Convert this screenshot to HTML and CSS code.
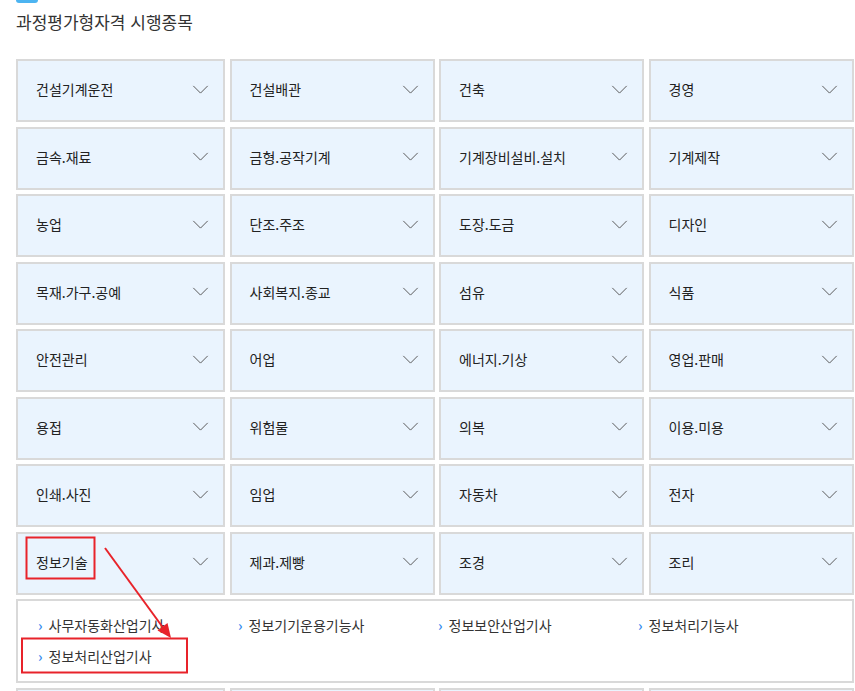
FILE: index.html
```html
<!DOCTYPE html>
<html lang="ko">
<head>
    <meta charset="UTF-8">
    <meta name="viewport" content="width=device-width, initial-scale=1.0">
    <title>과정평가형자격 시행종목</title>
    <link rel="stylesheet" href="styles.css">
</head>
<body>
<div class="wrap">
    <!-- 제목 -->
    <div class="title-tab"></div>
    <h2 class="title">과정평가형자격 시행종목</h2>

    <!-- 종목 목록 -->
    <div class="field-grid">
        <div class="field">건설기계운전<svg class="chev" viewBox="0 0 18 10"><polyline points="1,1 9,9 17,1"/></svg></div>
        <div class="field">건설배관<svg class="chev" viewBox="0 0 18 10"><polyline points="1,1 9,9 17,1"/></svg></div>
        <div class="field">건축<svg class="chev" viewBox="0 0 18 10"><polyline points="1,1 9,9 17,1"/></svg></div>
        <div class="field">경영<svg class="chev" viewBox="0 0 18 10"><polyline points="1,1 9,9 17,1"/></svg></div>

        <div class="field">금속.재료<svg class="chev" viewBox="0 0 18 10"><polyline points="1,1 9,9 17,1"/></svg></div>
        <div class="field">금형.공작기계<svg class="chev" viewBox="0 0 18 10"><polyline points="1,1 9,9 17,1"/></svg></div>
        <div class="field">기계장비설비.설치<svg class="chev" viewBox="0 0 18 10"><polyline points="1,1 9,9 17,1"/></svg></div>
        <div class="field">기계제작<svg class="chev" viewBox="0 0 18 10"><polyline points="1,1 9,9 17,1"/></svg></div>

        <div class="field">농업<svg class="chev" viewBox="0 0 18 10"><polyline points="1,1 9,9 17,1"/></svg></div>
        <div class="field">단조.주조<svg class="chev" viewBox="0 0 18 10"><polyline points="1,1 9,9 17,1"/></svg></div>
        <div class="field">도장.도금<svg class="chev" viewBox="0 0 18 10"><polyline points="1,1 9,9 17,1"/></svg></div>
        <div class="field">디자인<svg class="chev" viewBox="0 0 18 10"><polyline points="1,1 9,9 17,1"/></svg></div>

        <div class="field">목재.가구.공예<svg class="chev" viewBox="0 0 18 10"><polyline points="1,1 9,9 17,1"/></svg></div>
        <div class="field">사회복지.종교<svg class="chev" viewBox="0 0 18 10"><polyline points="1,1 9,9 17,1"/></svg></div>
        <div class="field">섬유<svg class="chev" viewBox="0 0 18 10"><polyline points="1,1 9,9 17,1"/></svg></div>
        <div class="field">식품<svg class="chev" viewBox="0 0 18 10"><polyline points="1,1 9,9 17,1"/></svg></div>

        <div class="field">안전관리<svg class="chev" viewBox="0 0 18 10"><polyline points="1,1 9,9 17,1"/></svg></div>
        <div class="field">어업<svg class="chev" viewBox="0 0 18 10"><polyline points="1,1 9,9 17,1"/></svg></div>
        <div class="field">에너지.기상<svg class="chev" viewBox="0 0 18 10"><polyline points="1,1 9,9 17,1"/></svg></div>
        <div class="field">영업.판매<svg class="chev" viewBox="0 0 18 10"><polyline points="1,1 9,9 17,1"/></svg></div>

        <div class="field">용접<svg class="chev" viewBox="0 0 18 10"><polyline points="1,1 9,9 17,1"/></svg></div>
        <div class="field">위험물<svg class="chev" viewBox="0 0 18 10"><polyline points="1,1 9,9 17,1"/></svg></div>
        <div class="field">의복<svg class="chev" viewBox="0 0 18 10"><polyline points="1,1 9,9 17,1"/></svg></div>
        <div class="field">이용.미용<svg class="chev" viewBox="0 0 18 10"><polyline points="1,1 9,9 17,1"/></svg></div>

        <div class="field">인쇄.사진<svg class="chev" viewBox="0 0 18 10"><polyline points="1,1 9,9 17,1"/></svg></div>
        <div class="field">임업<svg class="chev" viewBox="0 0 18 10"><polyline points="1,1 9,9 17,1"/></svg></div>
        <div class="field">자동차<svg class="chev" viewBox="0 0 18 10"><polyline points="1,1 9,9 17,1"/></svg></div>
        <div class="field">전자<svg class="chev" viewBox="0 0 18 10"><polyline points="1,1 9,9 17,1"/></svg></div>

        <div class="field">정보기술<svg class="chev" viewBox="0 0 18 10"><polyline points="1,1 9,9 17,1"/></svg></div>
        <div class="field">제과.제빵<svg class="chev" viewBox="0 0 18 10"><polyline points="1,1 9,9 17,1"/></svg></div>
        <div class="field">조경<svg class="chev" viewBox="0 0 18 10"><polyline points="1,1 9,9 17,1"/></svg></div>
        <div class="field">조리<svg class="chev" viewBox="0 0 18 10"><polyline points="1,1 9,9 17,1"/></svg></div>

        <!-- 펼쳐진 세부 종목 -->
        <div class="sub-panel">
            <ul class="sub-list">
                <li>사무자동화산업기사</li>
                <li>정보기기운용기능사</li>
                <li>정보보안산업기사</li>
                <li>정보처리기능사</li>
                <li>정보처리산업기사</li>
            </ul>
        </div>

        <!-- 다음 줄 (화면 아래로 이어짐) -->
        <div class="field"></div>
        <div class="field"></div>
        <div class="field"></div>
        <div class="field"></div>
    </div>
</div>

<!-- 안내 표시 -->
<svg class="marks" viewBox="0 0 855 691">
    <rect x="26.5" y="537.5" width="68" height="41"/>
    <rect x="22" y="638.5" width="165" height="34"/>
    <line x1="105" y1="548" x2="164" y2="629"/>
    <polygon points="171,638 157.5,630.5 167.5,623"/>
</svg>
</body>
</html>
```

FILE: styles.css
```css
body {
    margin: 0;
    background: #fff;
    font-family: "Noto Sans CJK KR", "Noto Sans", sans-serif;
    color: #222;
}

.wrap {
    padding: 0 1px 0 16px;
}

/* 제목 */
.title-tab {
    width: 22px;
    height: 3px;
    background: #4cb4f1;
    border-radius: 0 0 3px 3px;
}

.title {
    margin: 8px 0 27px;
    font-size: 17px;
    line-height: 21px;
    font-weight: normal;
    color: #333;
}

/* 종목 목록 */
.field-grid {
    display: grid;
    grid-template-columns: 209px 205px 205px 205px;
    gap: 4.5px 4.5px;
}

.field {
    box-sizing: border-box;
    height: 63px;
    display: flex;
    align-items: center;
    justify-content: space-between;
    padding: 0 14px 3px 18px;
    background: #eaf4fe;
    border: 2px solid #d9d9d9;
    font-size: 14px;
    color: #222;
}

.chev {
    width: 17px;
    height: 9px;
    fill: none;
    stroke: #5a5a5a;
    stroke-width: 1.1;
}

/* 펼쳐진 세부 종목 */
.sub-panel {
    grid-column: 1 / -1;
    box-sizing: border-box;
    height: 84px;
    background: #fff;
    border: 2px solid #d9d9d9;
    padding: 9px 20px;
}

.sub-list {
    margin: 0;
    padding: 0;
    list-style: none;
    display: grid;
    grid-template-columns: repeat(4, 200px);
}

.sub-list li {
    line-height: 31px;
    font-size: 14px;
    color: #333;
}

.sub-list li::before {
    content: "›";
    color: #3d8ef0;
    margin-right: 6px;
    font-size: 14px;
    font-weight: bold;
}

/* 안내 표시 */
.marks {
    position: absolute;
    top: 0;
    left: 0;
    width: 855px;
    height: 691px;
    pointer-events: none;
}

.marks rect {
    fill: none;
    stroke: #e8232a;
    stroke-width: 2;
}

.marks line {
    stroke: #e8232a;
    stroke-width: 2;
}

.marks polygon {
    fill: #e8232a;
}
```
